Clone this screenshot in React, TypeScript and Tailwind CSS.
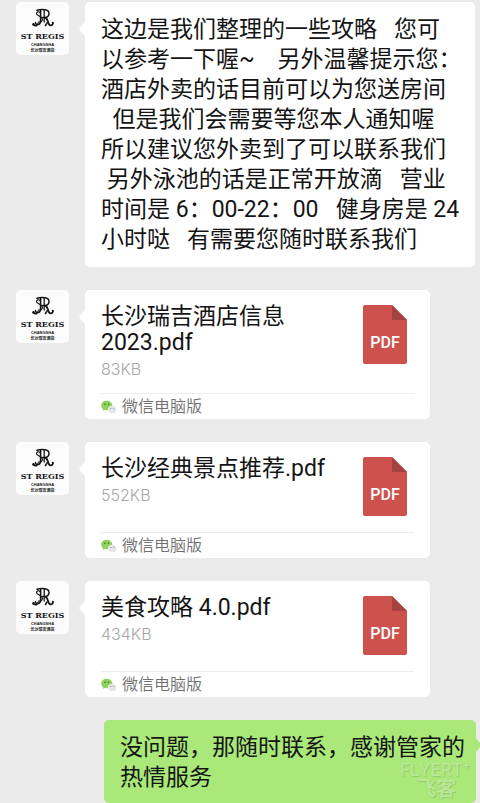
import type { ReactNode } from "react";

type PdfFile = { name: string; size: string };

const files: PdfFile[] = [
  { name: "长沙瑞吉酒店信息\n2023.pdf", size: "83KB" },
  { name: "长沙经典景点推荐.pdf", size: "552KB" },
  { name: "美食攻略 4.0.pdf", size: "434KB" },
];

const guideText = [
  "这边是我们整理的一些攻略   您可",
  "以参考一下喔~    另外温馨提示您：",
  "酒店外卖的话目前可以为您送房间",
  "  但是我们会需要等您本人通知喔",
  "所以建议您外卖到了可以联系我们",
  " 另外泳池的话是正常开放滴   营业",
  "时间是 6：00-22：00   健身房是 24",
  "小时哒   有需要您随时联系我们",
].join("\n");

function Avatar() {
  return (
    <svg
      viewBox="0 0 53 53"
      role="img"
      aria-label="ST REGIS CHANGSHA"
      className="size-[53px] shrink-0 rounded-[5px] bg-[#fcfcfc]"
    >
      <g fill="none" stroke="#161616" strokeLinecap="round" strokeLinejoin="round">
        <path strokeWidth="1.5" d="M21 8.200c2.500-.9 8-1 10 .1 2.700 1.300 2.700 5.400.1 6.700-1.200.6-2.900.7-4.400.4" />
        <path strokeWidth="1.6" d="M24.600 8.500v10.800c0 2-1.600 3.700-3.600 3" />
        <path strokeWidth="1.300" d="M28.200 8.500v11.500" />
        <path strokeWidth="1.200" d="M24 10.500c-1.300-1.400-3.800-.6-3.400 1.300.5 2.200 5 2.200 5.700 4.900.6 2.300-1.800 3.900-4.100 3.300" />
        <path strokeWidth="1.800" d="M29.500 15.600c2.400 1.400 2.200 4.400 3.500 6.700 1 1.700 3.400 1.600 4-.8" />
        <path strokeWidth="1.500" d="M22 21.800c-1.200 2.200-3.600 2.400-4.400.9M19.400 20.600l1.200 3.200M31 21l-1.500 2.500" />
      </g>
      <circle cx="17.500" cy="22.400" r="1.300" fill="#161616" />
      <circle cx="36.800" cy="20.800" r="1" fill="#161616" />
      <g fill="#161616" textAnchor="middle">
        <text x="26.500" y="36.500" className="font-['DejaVu_Serif',serif] text-[8px] font-bold">
          ST REGIS
        </text>
        <text x="26.500" y="43.500" className="font-['Liberation_Sans',sans-serif] text-[4px] font-bold">
          CHANGSHA
        </text>
        <text x="26.500" y="49.500" className="font-['Noto_Sans_CJK_SC',sans-serif] text-[4px] font-bold">
          长沙瑞吉酒店
        </text>
      </g>
    </svg>
  );
}

function PdfIcon() {
  return (
    <svg viewBox="0 0 44 59" role="img" aria-label="PDF" className="mt-px mr-[7px] mb-0.5 h-[59px] w-11 shrink-0">
      <path fill="#cd524e" d="M2 0h27l15 15v42a2 2 0 0 1-2 2H2a2 2 0 0 1-2-2V2a2 2 0 0 1 2-2z" />
      <path fill="#a44340" d="M29 0l15 15H29z" />
      <text x="22" y="42.500" textAnchor="middle" fill="#fff" className="font-['Roboto',sans-serif] text-base font-medium">
        PDF
      </text>
    </svg>
  );
}

function WeChatIcon() {
  return (
    <svg viewBox="0 0 16 14" aria-hidden="true" className="h-3.5 w-4 shrink-0">
      <path fill="#8fd35f" d="M5.700.8C2.600.8.200 2.900.200 5.500c0 1.500.8 2.800 2 3.700l-.5 1.900 2.100-1.100c.6.200 1.200.2 1.900.2 3.100 0 5.600-2.100 5.600-4.700S8.800.8 5.700.8z" />
      <path fill="#e3e5e8" d="M11.200 5.800c-2.500 0-4.400 1.600-4.400 3.600s1.900 3.600 4.400 3.600c.5 0 1-.1 1.500-.2l1.600.8-.4-1.400c1-.7 1.600-1.700 1.600-2.800 0-2-1.900-3.600-4.300-3.600z" />
      <g fill="#3d6b28">
        <circle cx="3.900" cy="4.200" r=".8" />
        <circle cx="7.600" cy="4.200" r=".8" />
      </g>
      <g fill="#8b9097">
        <circle cx="9.800" cy="8.500" r=".6" />
        <circle cx="12.700" cy="8.500" r=".6" />
      </g>
    </svg>
  );
}

function Received({ children }: { children: ReactNode }) {
  return (
    <div className="flex items-start gap-2.5 pr-[5px] pl-4">
      <Avatar />
      <div className="flex min-w-0 flex-1 items-start">
        <svg viewBox="0 0 6 14" aria-hidden="true" className="mt-5 h-3.5 w-1.5 shrink-0">
          <path fill="#fff" d="M6 0v14L.5 8Q0 7 .5 6z" />
        </svg>
        {children}
      </div>
    </div>
  );
}

function FileCard({ file }: { file: PdfFile }) {
  return (
    <article className="w-[345px] rounded-[5px] bg-white px-4">
      <div className="flex items-start justify-between border-b border-[#ededed] py-3.5">
        <div>
          <h2 className="text-[23px] leading-[26px] whitespace-pre-line">{file.name}</h2>
          <p className="mt-[3px] font-['Inter',sans-serif] text-base leading-5 font-light text-[#a8a8a8]">
            {file.size}
          </p>
        </div>
        <PdfIcon />
      </div>
      <footer className="flex h-[25px] items-center gap-[5px] text-base leading-6 font-[350] text-[#707070]">
        <WeChatIcon />
        微信电脑版
      </footer>
    </article>
  );
}

export default function App() {
  return (
    <main
      lang="zh-CN"
      className="flex flex-col gap-[23px] overflow-hidden bg-[#ebebeb] pt-0.5 font-['Roboto','Noto_Sans_CJK_SC',sans-serif] font-normal text-[#141414]"
    >
      <Received>
        <p className="min-w-0 flex-1 rounded-[5px] bg-white px-4 pt-[13px] pb-3 text-[23px] leading-[30px] whitespace-pre">
          {guideText}
        </p>
      </Received>

      {files.map((file) => (
        <Received key={file.size}>
          <FileCard file={file} />
        </Received>
      ))}

      <div className="relative flex items-start justify-end pl-4">
        <p className="w-[372px] rounded-[5px] bg-[#a9e879] pt-[13px] pb-2.5 pl-4 text-[23px] leading-[30px] whitespace-pre">
          {"没问题，那随时联系，感谢管家的\n热情服务"}
        </p>
        <svg viewBox="0 0 4 14" aria-hidden="true" className="mt-[18px] h-3.5 w-1 shrink-0">
          <path fill="#a9e879" d="M0 0v14l4-5V5z" />
        </svg>
        <div className="absolute right-0 bottom-0.5 flex w-20 flex-col font-normal text-[#bbe89a] [text-shadow:1px_1px_1px_#94cb6c]">
          <span className="font-['Inter',sans-serif] text-[17px] leading-4">FLYERT⁺</span>
          <span className="pl-4 text-[20px] leading-[23px] font-medium">飞客</span>
        </div>
      </div>
    </main>
  );
}
